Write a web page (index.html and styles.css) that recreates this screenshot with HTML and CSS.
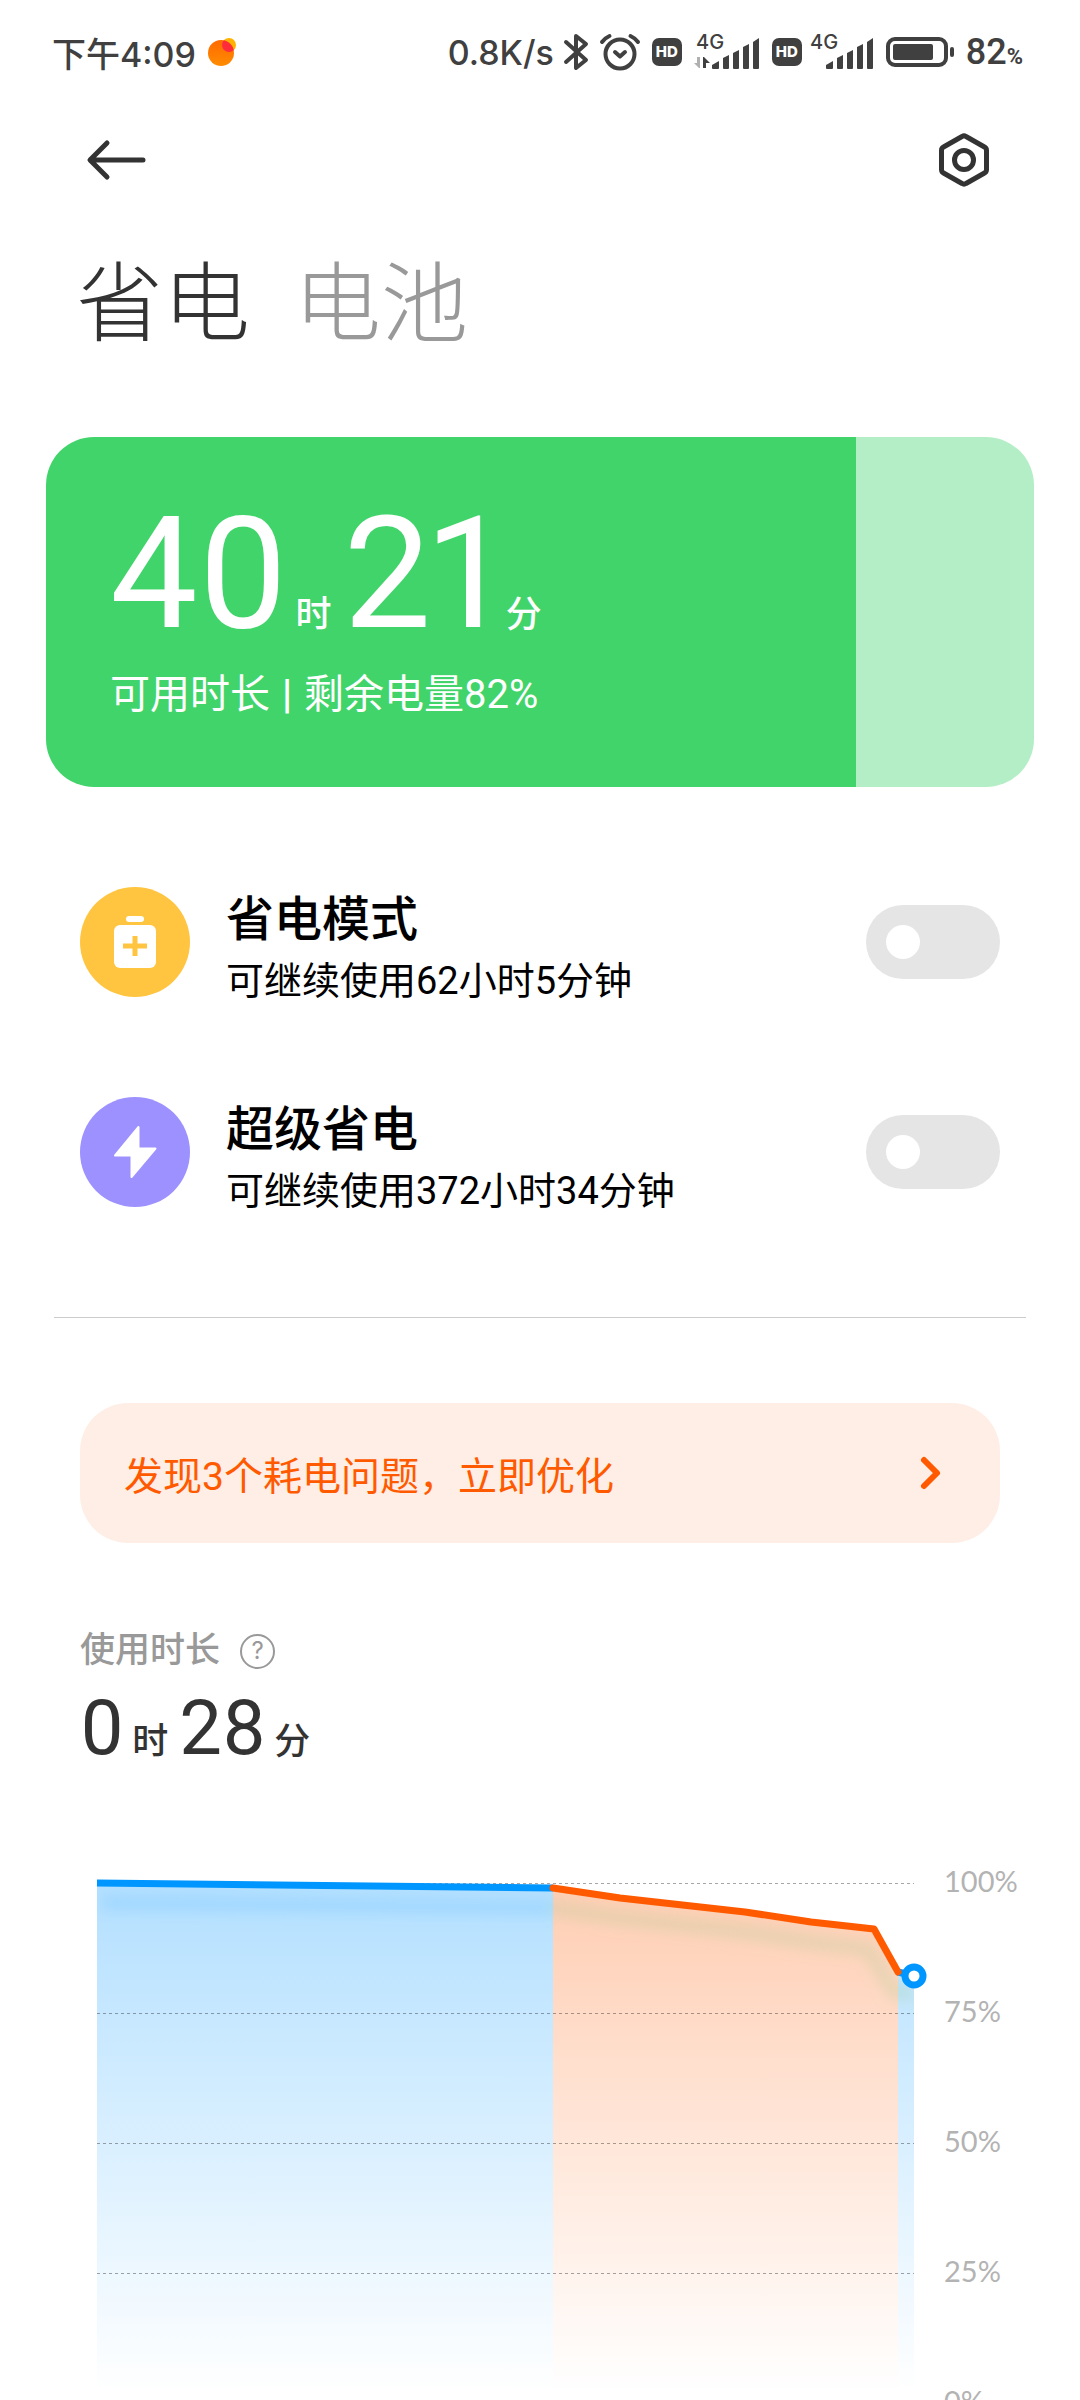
FILE: index.html
```html
<!DOCTYPE html>
<html lang="zh-CN">
<head>
    <meta charset="UTF-8">
    <meta name="viewport" content="width=device-width, initial-scale=1.0">
    <title>省电与电池</title>
    <link rel="stylesheet" href="styles.css">
</head>
<body>

<div class="screen">
    <!-- Status bar -->
    <div class="status-bar">
        <div class="status-left">
            <span>下午4:09</span>
            <svg width="28" height="28" viewBox="0 0 28 28">
                <defs>
                    <linearGradient id="dot" x1="0" y1="0" x2="0" y2="1">
                        <stop offset="0" stop-color="#ff6a00"/>
                        <stop offset="1" stop-color="#ff8c00"/>
                    </linearGradient>
                    <clipPath id="dot-clip"><circle cx="13" cy="15" r="13"/></clipPath>
                </defs>
                <circle cx="21" cy="7" r="7" fill="#ffb300"/>
                <circle cx="13" cy="15" r="13" fill="url(#dot)"/>
                <circle cx="21" cy="7" r="7" fill="#ff2d3c" clip-path="url(#dot-clip)"/>
            </svg>
        </div>
        <div class="status-right">
            <span>0.8K/s</span>
            <svg width="22" height="40" viewBox="5 0 22 40" fill="none" stroke="#404040" stroke-width="4" stroke-linecap="round" stroke-linejoin="round">
                <path d="M5 10 L25 28 L15 36 V4 L25 12 L5 30"/>
            </svg>
            <svg width="40" height="38" viewBox="0 0 40 38" fill="none" stroke="#404040" stroke-width="4" stroke-linecap="round">
                <circle cx="20" cy="21" r="14.5"/>
                <path d="M2 9 Q5 5 9.500 3 M38 9 Q35 5 30.500 3"/>
                <path d="M15 19 L20 23.500 L25 19" stroke-linejoin="round"/>
            </svg>
            <div class="sim">
                <span class="hd">HD</span>
                <svg width="66" height="36" viewBox="0 0 66 36" fill="#404040">
                    <text class="net" x="2" y="15">4G</text>
                    <path fill="#b0b0b0" d="M6 23 V34 H5 L0 29 H3 V23 Z"/>
                    <path d="M9 34 V23 H10 L16 29 H12 V34 Z"/>
                    <path d="M18 31 L25 27 V34 Q25 35 24 35 H19 Q18 35 18 34 Z"/>
                    <path d="M29 24 L35 21 V34 Q35 35 34 35 H30 Q29 35 29 34 Z"/>
                    <path d="M39 19 L45 16 V34 Q45 35 44 35 H40 Q39 35 39 34 Z"/>
                    <path d="M49 13 L55 10 V34 Q55 35 54 35 H50 Q49 35 49 34 Z"/>
                    <path d="M59 8 L65 4 V34 Q65 35 64 35 H60 Q59 35 59 34 Z"/>
                </svg>
            </div>
            <div class="sim">
                <span class="hd">HD</span>
                <svg width="60" height="36" viewBox="6 0 60 36" fill="#404040">
                    <text class="net" x="2" y="15">4G</text>
                    <path d="M18 31 L25 27 V34 Q25 35 24 35 H19 Q18 35 18 34 Z"/>
                    <path d="M29 24 L35 21 V34 Q35 35 34 35 H30 Q29 35 29 34 Z"/>
                    <path d="M39 19 L45 16 V34 Q45 35 44 35 H40 Q39 35 39 34 Z"/>
                    <path d="M49 13 L55 10 V34 Q55 35 54 35 H50 Q49 35 49 34 Z"/>
                    <path d="M59 8 L65 4 V34 Q65 35 64 35 H60 Q59 35 59 34 Z"/>
                </svg>
            </div>
            <svg width="68" height="30" viewBox="0 0 68 30">
                <rect x="2" y="2" width="58" height="26" rx="7" fill="none" stroke="#404040" stroke-width="4"/>
                <rect x="7" y="7" width="40" height="16" rx="2" fill="#404040"/>
                <rect x="64" y="10" width="4" height="10" rx="2" fill="#404040"/>
            </svg>
            <span class="percent">82<small>%</small></span>
        </div>
    </div>

    <!-- Back and settings -->
    <header class="toolbar">
        <button class="icon-btn" aria-label="返回">
            <svg width="60" height="56" viewBox="0 0 60 56" fill="none" stroke="#333" stroke-width="5" stroke-linecap="round" stroke-linejoin="round">
                <path d="M57 28 H5 M21 11 L4 28 L21 45"/>
            </svg>
        </button>
        <button class="icon-btn" aria-label="设置">
            <svg width="52" height="56" viewBox="0 0 52 56" fill="none" stroke="#333" stroke-width="5" stroke-linejoin="round">
                <path d="M24 4.500 Q26 3.200 28 4.500 L46.500 15 Q48.500 16 48.500 18.500 V37.500 Q48.500 40 46.500 41 L28 51.500 Q26 52.800 24 51.500 L5.500 41 Q3.500 40 3.500 37.500 V18.500 Q3.500 16 5.500 15 Z"/>
                <circle cx="26" cy="28" r="9.500"/>
            </svg>
        </button>
    </header>

    <nav class="tabs">
        <a href="#saver" class="active">省电</a>
        <a href="#battery">电池</a>
    </nav>

    <!-- Remaining time -->
    <section class="battery-card">
        <div class="time time-large">
            <span class="num">40</span><span class="unit">时</span>
            <span class="num">21</span><span class="unit">分</span>
        </div>
        <p class="remaining">可用时长 <b>|</b> 剩余电量82%</p>
    </section>

    <div class="modes">
        <div class="mode">
            <svg class="mode-icon" viewBox="0 0 110 110">
                <circle cx="55" cy="55" r="55" fill="#ffc540"/>
                <rect x="46" y="29" width="18" height="6" rx="3" fill="#fff"/>
                <rect x="34" y="38" width="42" height="43" rx="6" fill="#fff"/>
                <path d="M55 49 V69 M43 59 H67" stroke="#ffc540" stroke-width="5"/>
            </svg>
            <label class="mode-text" for="saver">
                <strong>省电模式</strong>
                <span>可继续使用62小时5分钟</span>
            </label>
            <input type="checkbox" class="switch" id="saver">
        </div>
        <div class="mode">
            <svg class="mode-icon" viewBox="0 0 110 110">
                <circle cx="55" cy="55" r="55" fill="#9c91ff"/>
                <path d="M58.500 30 L35 58.500 H51.500 V80 L75.500 51.500 H58.500 Z" fill="#fff" stroke="#fff" stroke-width="2" stroke-linejoin="round"/>
            </svg>
            <label class="mode-text" for="super-saver">
                <strong>超级省电</strong>
                <span>可继续使用372小时34分钟</span>
            </label>
            <input type="checkbox" class="switch" id="super-saver">
        </div>
    </div>

    <hr class="divider">

    <a href="#optimize" class="notice">
        <span>发现3个耗电问题，立即优化</span>
        <svg width="22" height="34" viewBox="0 0 22 34" fill="none" stroke="#ff5a00" stroke-width="6" stroke-linecap="round" stroke-linejoin="round">
            <path d="M4 4 L17 17 L4 30"/>
        </svg>
    </a>

    <!-- Usage time and battery curve -->
    <section class="usage">
        <div class="usage-head">
            <h2>使用时长</h2>
            <button class="help" aria-label="说明">?</button>
        </div>
        <div class="time time-small">
            <span class="num">0</span><span class="unit">时</span>
            <span class="num">28</span><span class="unit">分</span>
        </div>
    </section>

    <div class="chart">
        <svg class="curve" viewBox="0 0 817 520">
            <defs>
                <linearGradient id="blue" gradientUnits="userSpaceOnUse" x1="0" y1="0" x2="0" y2="510">
                    <stop offset="0" stop-color="#0096ff" stop-opacity=".3"/>
                    <stop offset="1" stop-color="#0096ff" stop-opacity="0"/>
                </linearGradient>
                <linearGradient id="orange" gradientUnits="userSpaceOnUse" x1="0" y1="0" x2="0" y2="510">
                    <stop offset="0" stop-color="#ff5a00" stop-opacity=".3"/>
                    <stop offset="1" stop-color="#ff5a00" stop-opacity="0"/>
                </linearGradient>
                <clipPath id="area">
                    <path d="M0 0 L456 5 L523 15 L648 29 L714 39 L777 46 L801 89 L817 93 V520 H0 Z"/>
                </clipPath>
                <filter id="soft" filterUnits="userSpaceOnUse" x="-30" y="-30" width="880" height="200">
                    <feGaussianBlur stdDeviation="7"/>
                </filter>
            </defs>
            <path d="M0 0 L456 5 V520 H0 Z" fill="url(#blue)"/>
            <path d="M456 5 L523 15 L648 29 L714 39 L777 46 L801 89 V520 H456 Z" fill="url(#orange)"/>
            <path d="M801 89 L817 93 V520 H801 Z" fill="url(#blue)"/>
            <g clip-path="url(#area)" fill="none" stroke-width="14">
                <path d="M4 20 L456 25" stroke="#0096ff" stroke-opacity=".12" filter="url(#soft)"/>
                <path d="M456 25 L523 35 L648 49 L714 59 L771 66 L797 109 L817 112" stroke="#a0c88c" stroke-opacity=".26" filter="url(#soft)"/>
            </g>
            <path d="M0 .5 H817 M0 130.500 H817 M0 260.500 H817 M0 390.500 H817" stroke="#000" stroke-opacity=".35" stroke-dasharray="3 3"/>
            <g fill="none" stroke-width="7" stroke-linejoin="round">
                <path d="M801 89 L817 93 M0 0 L456 5" stroke="#0096ff"/>
                <path d="M456 5 L523 15 L648 29 L714 39 L777 46 L801 89" stroke="#ff5a00" stroke-linecap="round"/>
            </g>
            <circle cx="817" cy="93" r="9" fill="#fff" stroke="#0096ff" stroke-width="7"/>
        </svg>
        <div class="scale">
            <span>100%</span>
            <span>75%</span>
            <span>50%</span>
            <span>25%</span>
            <span>0%</span>
        </div>
    </div>
</div>

</body>
</html>
```

FILE: styles.css
```css
* {
    box-sizing: border-box;
}
body {
    margin: 0;
    background-color: #fff;
    color: #333;
    font-family: Roboto, "Noto Sans CJK SC", sans-serif;
}
a {
    text-decoration: none;
}
svg {
    display: block;
    flex-shrink: 0;
    overflow: visible;
}
.screen {
    height: 100vh;
    overflow: hidden;
}

/* Status bar */
.status-bar {
    display: flex;
    justify-content: space-between;
    align-items: center;
    height: 104px;
    padding: 0 57px 0 52px;
    color: #404040;
    font-family: Inter, "Noto Sans CJK SC", sans-serif;
    font-size: 34px;
    font-weight: 500;
    white-space: nowrap;
}
.status-left, .status-right, .sim {
    display: flex;
    align-items: center;
}
.status-left {
    gap: 12px;
}
.status-right {
    gap: 12px;
}
.sim {
    gap: 12px;
}
.hd {
    width: 30px;
    border-radius: 7px;
    background-color: #404040;
    color: #fff;
    font-size: 15px;
    font-weight: 800;
    line-height: 28px;
    text-align: center;
}
.net {
    font-size: 20px;
}
.percent {
    font-family: Roboto, sans-serif;
    font-size: 36px;
}
.percent small {
    font-size: 22px;
    font-weight: 700;
}

/* Header */
.toolbar {
    display: flex;
    justify-content: space-between;
    padding: 28px 90px 0 86px;
}
.icon-btn {
    padding: 0;
    border: none;
    background: none;
}
.tabs {
    display: flex;
    gap: 44px;
    padding: 53px 76px 0;
    font-size: 87px;
    font-weight: 300;
    line-height: 128px;
}
.tabs a {
    color: #999;
}
.tabs .active {
    color: #333;
}

/* Green battery card */
.battery-card {
    margin: 68px 46px 0;
    padding: 77px 64px 68px;
    border-radius: 48px;
    background: linear-gradient(to right, #41d46a 82%, #b3eec6 82%);
    color: #fff;
}
.time {
    display: flex;
    align-items: baseline;
    font-variant-numeric: proportional-nums;
}
.unit {
    font-size: 36px;
    font-weight: 500;
    line-height: 1;
}
.time-large {
    font-size: 156px;
    line-height: 120px;
}
.time-large .unit {
    margin: 0 12px 0 7px;
}
.remaining {
    margin: 37px 0 0;
    font-size: 40px;
    line-height: 48px;
}
.remaining b {
    margin: 0 2px;
    font-weight: 700;
}

/* Power saving modes */
.modes {
    display: grid;
    gap: 88px;
    padding: 100px 80px 98px;
    color: #000;
}
.mode {
    display: flex;
    align-items: flex-start;
}
.mode-icon {
    width: 110px;
    height: 110px;
}
.mode-text {
    flex: 1;
    margin-left: 36px;
}
.mode-text strong, .mode-text span {
    display: block;
}
.mode-text strong {
    font-size: 48px;
    font-weight: 500;
    line-height: 66px;
}
.mode-text span {
    font-size: 38px;
    line-height: 56px;
}
.switch {
    appearance: none;
    width: 134px;
    height: 74px;
    margin: 18px 0;
    padding: 20px;
    border-radius: 37px;
    background-color: #e5e5e5;
}
.switch::before {
    content: "";
    display: block;
    width: 34px;
    height: 34px;
    border-radius: 50%;
    background-color: #fff;
}
.switch:checked {
    background-color: #41d46a;
}
.switch:checked::before {
    margin-left: auto;
}
.divider {
    height: 1px;
    margin: 0 54px;
    border: none;
    background-color: #ccc;
}

/* Notice */
.notice {
    display: flex;
    justify-content: space-between;
    align-items: center;
    height: 140px;
    margin: 85px 80px 0;
    padding: 0 58px 0 44px;
    border-radius: 48px;
    background-color: #ffeee6;
    color: #ff5a00;
    font-size: 39px;
}

/* Usage */
.usage {
    padding: 83px 80px 0;
}
.usage-head {
    display: flex;
    align-items: center;
    gap: 20px;
    color: #999;
}
.usage-head h2 {
    margin: 0;
    font-size: 35px;
    font-weight: 500;
    line-height: 50px;
}
.help {
    width: 35px;
    height: 35px;
    padding: 0;
    border: 2px solid #999;
    border-radius: 50%;
    background: none;
    color: #999;
    font-family: Inter, sans-serif;
    font-size: 24px;
    line-height: 30px;
}
.time-small {
    margin-top: 2px;
    font-size: 76px;
    line-height: 100px;
}
.time-small .unit {
    margin: 0 11px 0 8px;
}

/* Chart */
.chart {
    display: flex;
    padding: 87px 60px 0 97px;
}
.curve {
    flex: 1;
    min-width: 0;
    margin: 18px 0 14px;
}
.scale {
    display: flex;
    flex-direction: column;
    justify-content: space-between;
    width: 106px;
    padding-left: 30px;
    color: #b3b3b3;
    font-family: Lato, sans-serif;
    font-size: 29px;
    line-height: 32px;
}
```
